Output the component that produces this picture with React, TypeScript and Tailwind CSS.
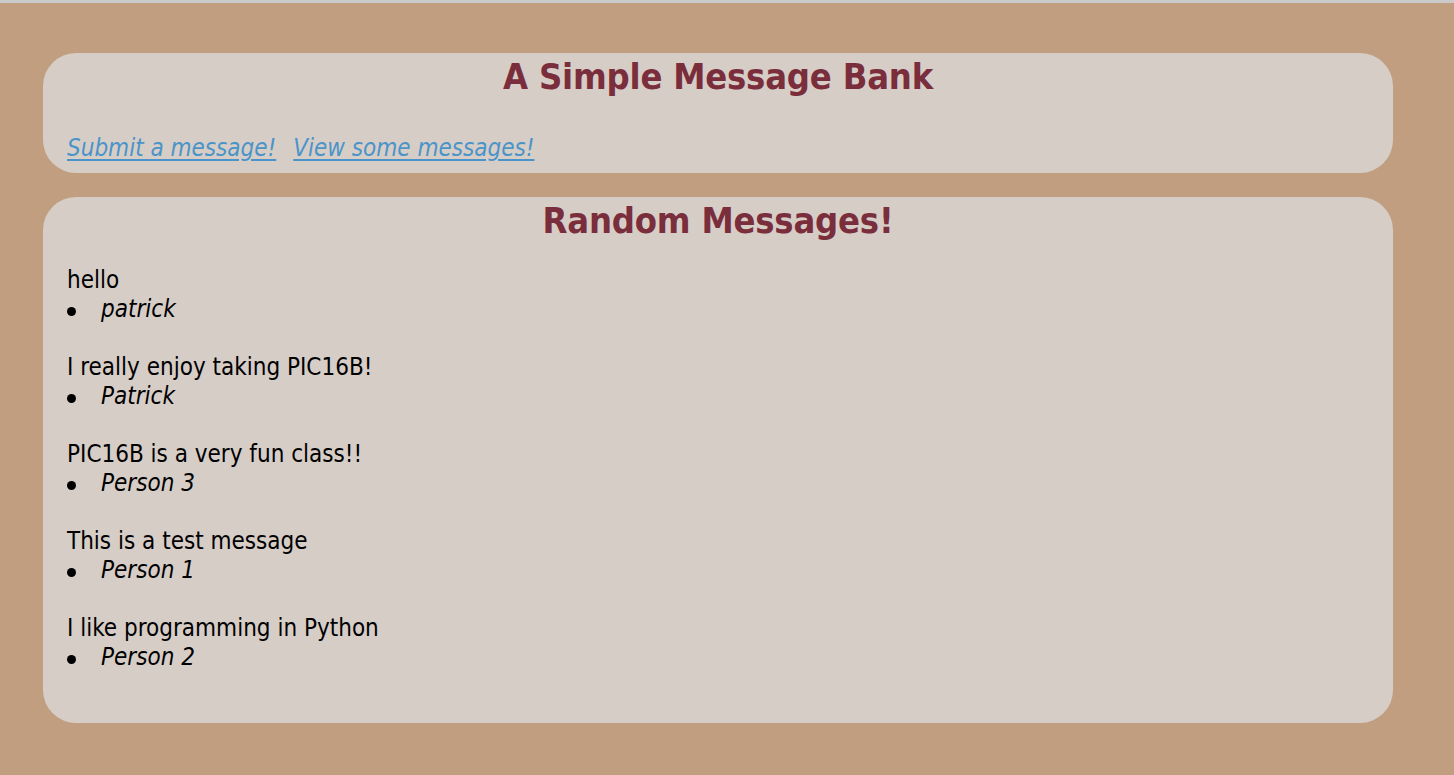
import React from "react";

const messages = [
  { text: "hello", name: "patrick" },
  { text: "I really enjoy taking PIC16B!", name: "Patrick" },
  { text: "PIC16B is a very fun class!!", name: "Person 3" },
  { text: "This is a test message", name: "Person 1" },
  { text: "I like programming in Python", name: "Person 2" },
];

const font = {
  fontFamily: '"DejaVu Sans Condensed", "DejaVu Sans", sans-serif',
};

export default function App() {
  return (
    <div
      className="min-h-[775px] bg-[#c09e7f] border-t-[3px] border-[#cbcbcb] pt-[50px] pl-[43px] pr-[61px] pb-[52px] [font-stretch:condensed]"
      style={font}
    >
      <div className="bg-[#d7cdc7] rounded-[33px] h-[120px] px-[24px] flex flex-col">
        <h1 className="text-center text-[36px] leading-[43px] font-bold text-[#7a2e3c] pt-[2px] tracking-[-0.2px]">
          A Simple Message Bank
        </h1>
        <nav className="mt-[36px] flex gap-[17px] text-[24px] leading-[29px] italic">
          <a href="#" className="text-[#4a94c9] underline underline-offset-[3px]">
            Submit a message!
          </a>
          <a href="#" className="text-[#4a94c9] underline underline-offset-[3px]">
            View some messages!
          </a>
        </nav>
      </div>

      <div className="mt-[24px] bg-[#d7cdc7] rounded-[33px] h-[526px] px-[24px] flex flex-col">
        <h2 className="text-center text-[36px] leading-[43px] font-bold text-[#7a2e3c] pt-[2px] tracking-[-0.2px]">
          Random Messages!
        </h2>
        <div className="mt-[24px] flex flex-col gap-[29px] text-[24px] leading-[29px] text-black">
          {messages.map((m) => (
            <div key={m.text + m.name}>
              <p>{m.text}</p>
              <div className="flex items-center">
                <span className="shrink-0 w-[9px] h-[9px] rounded-full bg-black mt-[4px]" />
                <span className="ml-[25px] italic">{m.name}</span>
              </div>
            </div>
          ))}
        </div>
      </div>
    </div>
  );
}
